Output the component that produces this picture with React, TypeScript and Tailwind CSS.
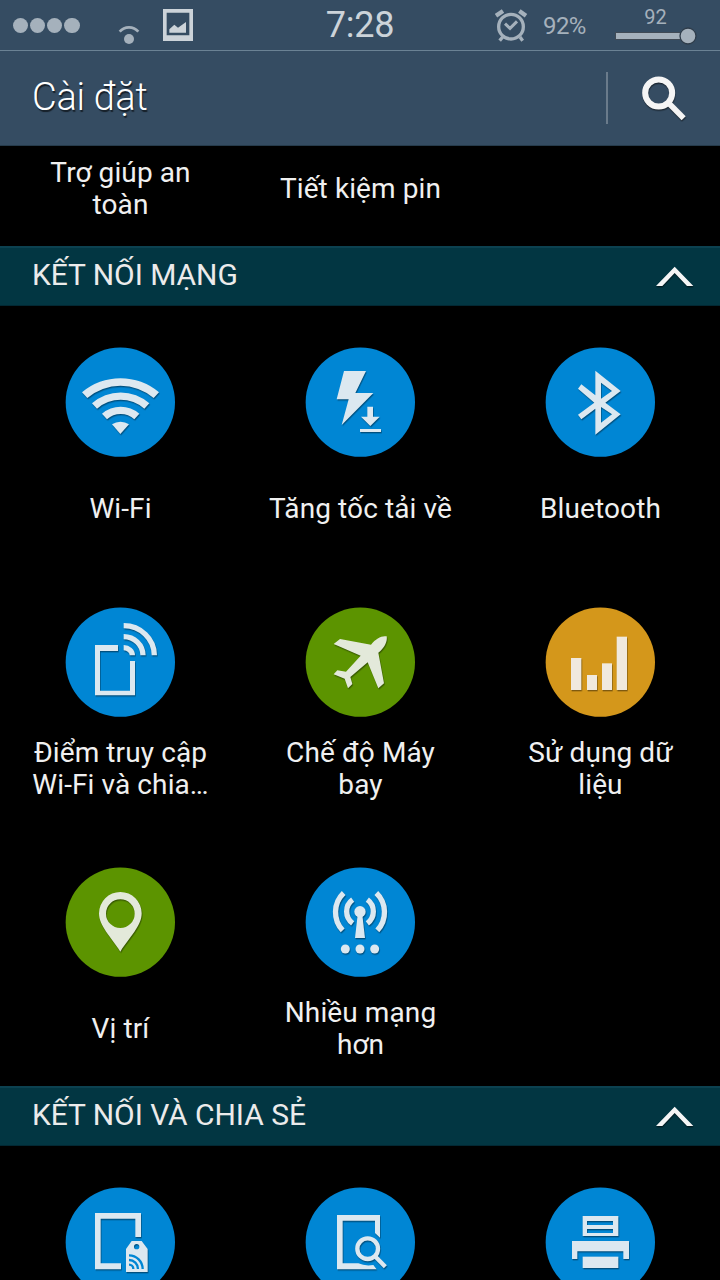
import React from 'react';

const BLUE = '#0086d4';
const GREEN = '#5c9400';
const ORANGE = '#d4971b';

interface SettingItem {
  id: string;
  label?: string[];
  color: string;
  glyphColor: string;
  icon: React.ReactNode;
}

const WifiIcon = (
  <>
    <path d="M96 172A178 178 0 0 1 327 172L311 189A154 154 0 0 0 112 189Z" />
    <path d="M126 205A129 129 0 0 1 298 205L283 221A107 107 0 0 0 141 221Z" />
    <path d="M156 236A86 86 0 0 1 268 236L253 253A61 61 0 0 0 171 253Z" />
    <path d="M186 268A45 45 0 0 1 237 268L211 297Z" />
  </>
);

const BoosterIcon = (
  <>
    <path d="M162 108H228L196 174H250L155 270L176 193H140Z" />
    <path d="M232 215H249V245H269L241 273L213 245H232Z" />
    <rect x="210" y="282" width="63" height="9" />
  </>
);

const BluetoothIcon = (
  <path
    fillRule="evenodd"
    d="M196 107L272 168L226 203L272 238L196 299V221L154 253L144 239L193 203L144 161L154 148L196 181ZM213 143V191L246 168ZM213 216V263L246 238Z"
  />
);

const HotspotIcon = (
  <>
    <path d="M135 150H204V168H150V287H240V198H255V301H135Z" />
    <g fill="none" stroke="currentColor" strokeWidth="16">
      <path d="M221 92A92 89 0 0 1 313 181" />
      <path d="M221 125A58 56 0 0 1 279 181" />
      <path d="M221 158A26 23 0 0 1 247 181" />
    </g>
  </>
);

const PlaneIcon = (
  <path d="M150 132L243 149C258 130 275 121 290 124C293 140 282 160 265 173L282 265L265 280L233 202L181 246L187 267L174 280L164 251L131 238L142 226L168 230L212 182L131 147Z" />
);

const DataUsageIcon = (
  <>
    <rect x="123" y="189" width="31" height="96" />
    <rect x="171" y="240" width="30" height="45" />
    <rect x="216" y="205" width="30" height="80" />
    <rect x="260" y="125" width="31" height="160" />
  </>
);

const LocationIcon = (
  <path
    fillRule="evenodd"
    d="M147 175A64 64 0 0 1 275 175C275 213 239 246 211 290C183 246 147 213 147 175ZM168 176A43 43 0 0 0 254 176A43 43 0 0 0 168 176Z"
  />
);

const MoreNetworksIcon = (
  <>
    <circle cx="210" cy="170" r="17" />
    <path d="M203 180H217L225 249H195Z" />
    <circle cx="166" cy="282" r="13.5" />
    <circle cx="210" cy="282" r="13.5" />
    <circle cx="254" cy="282" r="13.5" />
    <g fill="none" stroke="currentColor" strokeWidth="16">
      <path d="M188 134A44 44 0 0 0 188 205" />
      <path d="M232 134A44 44 0 0 1 232 205" />
      <path d="M161 114A80 80 0 0 0 158 226" />
      <path d="M259 114A80 80 0 0 1 262 226" />
    </g>
  </>
);

const NfcIcon = (
  <>
    <path d="M135 114H273V186H256V131H152V265H213V283H135Z" />
    <path fillRule="evenodd" d="M245 198H275L293 222V291H228V222ZM252 215A8 8 0 0 0 268 215A8 8 0 0 0 252 215Z" />
    <g fill="none" stroke={BLUE} strokeWidth="7">
      <path d="M237 241A41 41 0 0 1 278 282" />
      <path d="M237 255A27 27 0 0 1 264 282" />
      <path d="M237 269A13 13 0 0 1 250 282" />
    </g>
  </>
);

const NearbyIcon = (
  <>
    <path d="M141 120H270V188L255 174V137H158V265H205Q225 274 250 270L260 283H141Z" />
    <g fill="none" stroke="currentColor">
      <circle cx="233" cy="221" r="31" strokeWidth="13" />
      <path d="M255 244L286 275" strokeWidth="13" />
    </g>
  </>
);

const PrinterIcon = (
  <>
    <path fillRule="evenodd" d="M158 123H265V183H158ZM171 138V150H249V138ZM171 162V174H249V162Z" />
    <path d="M126 198H297V252H280V229H142V252H126Z" />
    <rect x="158" y="245" width="107" height="34" />
  </>
);

const networkItems: SettingItem[] = [
  { id: 'wifi', label: ['Wi-Fi'], color: BLUE, glyphColor: '#dce8f0', icon: WifiIcon },
  { id: 'booster', label: ['Tăng tốc tải về'], color: BLUE, glyphColor: '#dce8f0', icon: BoosterIcon },
  { id: 'bluetooth', label: ['Bluetooth'], color: BLUE, glyphColor: '#dce8f0', icon: BluetoothIcon },
  { id: 'hotspot', label: ['Điểm truy cập', 'Wi-Fi và chia…'], color: BLUE, glyphColor: '#dce8f0', icon: HotspotIcon },
  { id: 'airplane', label: ['Chế độ Máy', 'bay'], color: GREEN, glyphColor: '#e3e9da', icon: PlaneIcon },
  { id: 'data', label: ['Sử dụng dữ', 'liệu'], color: ORANGE, glyphColor: '#f0e9de', icon: DataUsageIcon },
  { id: 'location', label: ['Vị trí'], color: GREEN, glyphColor: '#e3e9da', icon: LocationIcon },
  { id: 'more', label: ['Nhiều mạng', 'hơn'], color: BLUE, glyphColor: '#dce8f0', icon: MoreNetworksIcon },
];

const shareItems: SettingItem[] = [
  { id: 'nfc', color: BLUE, glyphColor: '#dce8f0', icon: NfcIcon },
  { id: 'nearby', color: BLUE, glyphColor: '#dce8f0', icon: NearbyIcon },
  { id: 'print', color: BLUE, glyphColor: '#dce8f0', icon: PrinterIcon },
];

const Label: React.FC<{ lines: string[] }> = ({ lines }) => (
  <div className="pl-px text-center text-[28px] leading-8 tracking-[0.1px] whitespace-nowrap text-[#f0f0f0]">
    {lines.map((line) => (
      <p key={line}>{line}</p>
    ))}
  </div>
);

const SettingTile: React.FC<{ item: SettingItem }> = ({ item }) => (
  <div className="flex h-[260px] flex-col items-center pt-[41px]">
    <svg className="size-[110px] shrink-0" viewBox="45 36 330 330">
      <circle cx="211" cy="201.5" r="164" fill={item.color} />
      <g
        className="drop-shadow-[2px_4px_1.5px_rgba(0,0,0,0.4)]"
        fill={item.glyphColor}
        color={item.glyphColor}
      >
        {item.icon}
      </g>
    </svg>
    {item.label && (
      <div className="flex h-[104px] items-center">
        <Label lines={item.label} />
      </div>
    )}
  </div>
);

const SectionHeader: React.FC<{ title: string }> = ({ title }) => (
  <div className="flex h-[60px] shrink-0 items-center justify-between border-t-2 border-b border-t-[#0c4150] border-b-[#022833] bg-[#023642] pr-[26px] pl-8">
    <h2 className="pb-1 text-[30px] leading-9 tracking-[-0.05px] text-[#ebebeb]">{title}</h2>
    <svg className="mt-px h-[22px] w-[38px]" viewBox="377 78 114 66">
      <path
        className="drop-shadow-[1px_4px_1px_rgba(0,0,0,0.5)]"
        d="M377 138L433 80L489 138H470L433 99L396 138Z"
        fill="#f5f5f5"
      />
    </svg>
  </div>
);

const StatusBar: React.FC = () => (
  <div className="flex h-[50px] shrink-0 items-center text-[#a5b1bc]">
    <div className="flex w-[118px] gap-[1.6px] pt-px pl-[12.5px]">
      {[0, 1, 2, 3].map((dot) => (
        <span key={dot} className="size-[15.6px] rounded-full bg-[#a5b1bc]" />
      ))}
    </div>
    <svg className="mt-[18px] h-5 w-[22px]" viewBox="354 72 66 60">
      <path d="M359 95A37 37 0 0 1 415 95" fill="none" stroke="currentColor" strokeWidth="8" />
      <circle cx="387" cy="117" r="15" fill="currentColor" />
    </svg>
    <svg className="ml-[23px] h-8 w-[30px]" viewBox="489 27 90 96" fill="#ccd3d9">
      <path fillRule="evenodd" d="M489 27H579V123H489ZM500 38V106H568V38Z" />
      <path d="M508 98V88L523 74L534 83L558 66V98Z" />
    </svg>
    <span className="ml-[131px] w-[72px] text-center text-[36px] leading-[50px] tracking-[-0.2px] text-[#ccd3d9]">7:28</span>
    <svg className="ml-[99px] size-[33px]" viewBox="405 27 99 99" fill="none" stroke="currentColor">
      <circle cx="453" cy="80" r="37" strokeWidth="10" />
      <path d="M435 71L450 85L471 64" strokeWidth="9" />
      <path d="M408 47L429 33M478 33L498 47" strokeWidth="13" />
      <path d="M428 111L419 122M480 111L488 122" strokeWidth="10" />
    </svg>
    <span className="mt-0.5 ml-[15px] w-[44px] text-[24px] leading-[48px] tracking-[-0.6px]">92%</span>
    <div className="ml-[26.5px] flex w-[84px] flex-col items-center pt-0.5">
      <span className="h-5 text-[20px] leading-5">92</span>
      <svg className="h-[18px] w-[84px]" viewBox="0 0 84 18">
        <rect x="1.5" y="5.5" width="68" height="7" fill="currentColor" stroke="#404a55" />
        <circle cx="74" cy="9" r="8" fill="currentColor" stroke="#2e3c4a" strokeWidth="1.3" />
      </svg>
    </div>
  </div>
);

const App: React.FC = () => {
  return (
    <div className="flex h-[1280px] w-[720px] flex-col overflow-hidden bg-black font-[Roboto,sans-serif]">
      <header className="flex h-[146px] shrink-0 flex-col border-b border-[#263b4b] bg-[#354c62]">
        <StatusBar />
        <div className="flex flex-1 items-center border-t border-[#6b8294] pl-8">
          <h1 className="flex-1 pb-0.5 text-[38px] leading-[48px] font-light tracking-[-0.25px] text-white [text-shadow:1px_2px_1px_rgba(0,0,0,0.6)]">
            Cài đặt
          </h1>
          <div className="h-[52px] w-0.5 bg-[#6a7b8b]" />
          <svg className="mt-px mr-8 ml-[34px] size-[46px]" viewBox="846 226 138 138" fill="none" stroke="#f5f5f5">
            <g className="drop-shadow-[1px_4px_1px_rgba(0,0,0,0.5)]">
              <circle cx="896" cy="277" r="40.5" strokeWidth="18" />
              <path d="M925 306L971 353" strokeWidth="17" />
            </g>
          </svg>
        </div>
      </header>

      <div className="grid h-[100px] shrink-0 grid-cols-3 items-center pb-3.5">
        <Label lines={['Trợ giúp an', 'toàn']} />
        <Label lines={['Tiết kiệm pin']} />
      </div>

      <SectionHeader title="KẾT NỐI MẠNG" />
      <div className="grid shrink-0 grid-cols-3">
        {networkItems.map((item) => (
          <SettingTile key={item.id} item={item} />
        ))}
      </div>

      <SectionHeader title="KẾT NỐI VÀ CHIA SẺ" />
      <div className="grid shrink-0 grid-cols-3">
        {shareItems.map((item) => (
          <SettingTile key={item.id} item={item} />
        ))}
      </div>
    </div>
  );
};

export default App;
